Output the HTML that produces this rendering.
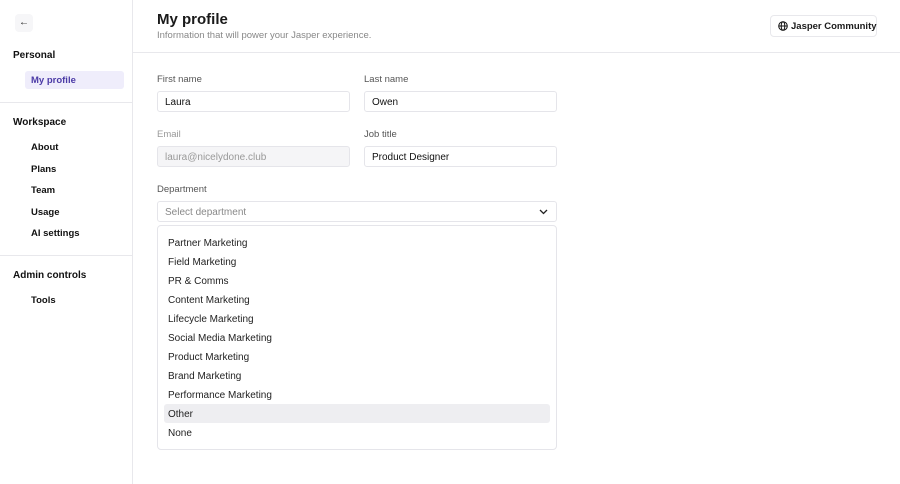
<!DOCTYPE html>
<html><head><style>
*{box-sizing:border-box;margin:0;padding:0}
body{width:900px;height:484px;background:#fff;font-family:"Liberation Sans",sans-serif;color:#1a1a1a;position:relative;overflow:hidden}
.abs{position:absolute;white-space:nowrap}
.side{left:0;top:0;width:133px;height:484px;border-right:1px solid #e8e8ec}
.h{font-size:10px;font-weight:bold;color:#111}
.it{font-size:9.5px;color:#111;font-weight:600}
.lbl{font-size:9.5px;color:#555}
.inp{height:21px;border:1px solid #e5e5ea;border-radius:3px;font-size:10px;padding:0 7px;line-height:21px;color:#111}
.opt{left:168px;font-size:10px;color:#222}
</style></head><body>
<div class="abs side"></div>
<div class="abs" style="left:15px;top:14px;width:18px;height:18px;border-radius:4px;background:#f6f6f8;font-size:10px;text-align:center;line-height:17px">←</div>
<div class="abs h" style="left:13px;top:50px">Personal</div>
<div class="abs" style="left:25px;top:71px;width:99px;height:18px;background:#efedfb;border-radius:3px"></div>
<div class="abs it" style="left:31px;top:75px;color:#4b3aa6">My profile</div>
<div class="abs" style="left:0;top:102px;width:133px;border-top:1px solid #e8e8ec"></div>
<div class="abs h" style="left:13px;top:117px">Workspace</div>
<div class="abs it" style="left:31px;top:142px">About</div>
<div class="abs it" style="left:31px;top:164px">Plans</div>
<div class="abs it" style="left:31px;top:185px">Team</div>
<div class="abs it" style="left:31px;top:207px">Usage</div>
<div class="abs it" style="left:31px;top:228px">AI settings</div>
<div class="abs" style="left:0;top:255px;width:133px;border-top:1px solid #e8e8ec"></div>
<div class="abs h" style="left:13px;top:270px">Admin controls</div>
<div class="abs it" style="left:31px;top:295px">Tools</div>

<div class="abs" style="left:157px;top:11px;font-size:15px;font-weight:bold">My profile</div>
<div class="abs" style="left:157px;top:30px;font-size:9.5px;color:#888">Information that will power your Jasper experience.</div>
<div class="abs" style="left:770px;top:15px;width:107px;height:22px;border:1px solid #e8e8ec;border-radius:4px;font-size:9.5px;font-weight:bold;line-height:21px;padding-left:20px">Jasper Community
<svg style="position:absolute;left:7px;top:5px" width="10" height="10" viewBox="0 0 10 10" fill="none" stroke="#111" stroke-width="1"><circle cx="5" cy="5" r="4.3"/><ellipse cx="5" cy="5" rx="1.8" ry="4.3"/><path d="M0.7 5h8.6"/></svg></div>
<div class="abs" style="left:133px;top:52px;width:767px;border-top:1px solid #e8e8ec"></div>

<div class="abs lbl" style="left:157px;top:74px">First name</div>
<div class="abs inp" style="left:157px;top:91px;width:193px">Laura</div>
<div class="abs lbl" style="left:364px;top:74px">Last name</div>
<div class="abs inp" style="left:364px;top:91px;width:193px">Owen</div>
<div class="abs lbl" style="left:157px;top:129px;color:#999">Email</div>
<div class="abs inp" style="left:157px;top:146px;width:193px;background:#f5f5f7;color:#999">laura@nicelydone.club</div>
<div class="abs lbl" style="left:364px;top:129px">Job title</div>
<div class="abs inp" style="left:364px;top:146px;width:193px">Product Designer</div>
<div class="abs lbl" style="left:157px;top:184px">Department</div>
<div class="abs inp" style="left:157px;top:201px;width:400px;color:#888">Select department
<svg style="position:absolute;right:8px;top:6px" width="9" height="7" viewBox="0 0 9 7" fill="none" stroke="#222" stroke-width="1.3"><path d="M1 2l3.5 3.5L8 2"/></svg></div>
<div class="abs" style="left:157px;top:225px;width:400px;height:225px;border:1px solid #e5e5ea;border-radius:4px"></div>
<div class="abs" style="left:164px;top:404px;width:386px;height:19px;background:#eeeef1;border-radius:3px"></div>
<div class="abs opt" style="top:238px">Partner Marketing</div>
<div class="abs opt" style="top:257px">Field Marketing</div>
<div class="abs opt" style="top:276px">PR &amp; Comms</div>
<div class="abs opt" style="top:295px">Content Marketing</div>
<div class="abs opt" style="top:314px">Lifecycle Marketing</div>
<div class="abs opt" style="top:333px">Social Media Marketing</div>
<div class="abs opt" style="top:352px">Product Marketing</div>
<div class="abs opt" style="top:371px">Brand Marketing</div>
<div class="abs opt" style="top:390px">Performance Marketing</div>
<div class="abs opt" style="top:409px">Other</div>
<div class="abs opt" style="top:428px">None</div>
</body></html>
